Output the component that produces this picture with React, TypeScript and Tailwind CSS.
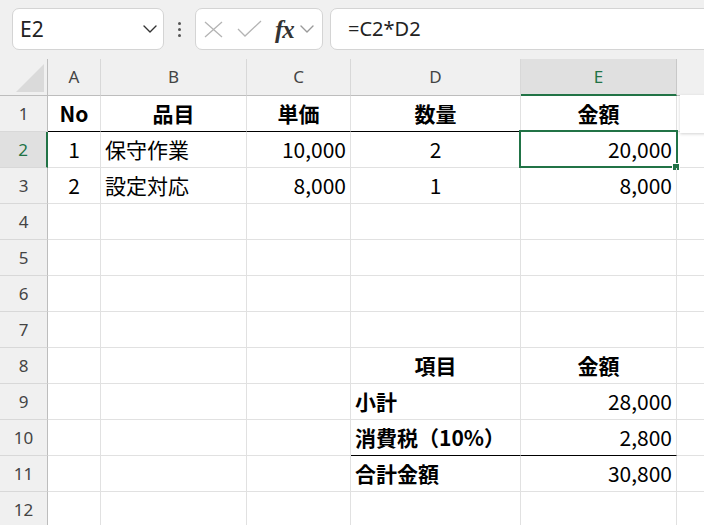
import React from "react";

const cols = [
  { key: "A", w: "w-[53px]" },
  { key: "B", w: "w-[146px]" },
  { key: "C", w: "w-[104px]" },
  { key: "D", w: "w-[170px]" },
  { key: "E", w: "w-[156px]" },
];

type Cell = { t?: string; align?: "l" | "c" | "r"; bold?: boolean };

const data: Record<number, Record<string, Cell>> = {
  1: {
    A: { t: "No", align: "c", bold: true },
    B: { t: "品目", align: "c", bold: true },
    C: { t: "単価", align: "c", bold: true },
    D: { t: "数量", align: "c", bold: true },
    E: { t: "金額", align: "c", bold: true },
  },
  2: {
    A: { t: "1", align: "c" },
    B: { t: "保守作業", align: "l" },
    C: { t: "10,000", align: "r" },
    D: { t: "2", align: "c" },
    E: { t: "20,000", align: "r" },
  },
  3: {
    A: { t: "2", align: "c" },
    B: { t: "設定対応", align: "l" },
    C: { t: "8,000", align: "r" },
    D: { t: "1", align: "c" },
    E: { t: "8,000", align: "r" },
  },
  8: {
    D: { t: "項目", align: "c", bold: true },
    E: { t: "金額", align: "c", bold: true },
  },
  9: {
    D: { t: "小計", align: "l", bold: true },
    E: { t: "28,000", align: "r" },
  },
  10: {
    D: { t: "消費税（10%）", align: "l", bold: true },
    E: { t: "2,800", align: "r" },
  },
  11: {
    D: { t: "合計金額", align: "l", bold: true },
    E: { t: "30,800", align: "r" },
  },
};

function blackBottom(row: number, col: string) {
  if (row === 1) return true;
  if (row === 10 && (col === "D" || col === "E")) return true;
  return false;
}

function Chevron({ cls, color }: { cls: string; color: string }) {
  return (
    <svg className={cls} viewBox="0 0 14 8" fill="none">
      <path d="M1 1 L7 7 L13 1" stroke={color} strokeWidth="1.4" strokeLinecap="round" strokeLinejoin="round" />
    </svg>
  );
}

export default function App() {
  const rows = Array.from({ length: 12 }, (_, i) => i + 1);
  return (
    <div
      className="relative w-[704px] h-[525px] overflow-hidden bg-white text-black"
      style={{ fontFamily: '"Noto Sans", "Noto Sans CJK JP", sans-serif' }}
    >
      {/* Toolbar */}
      <div className="h-[59px] bg-[#f0f0f0] flex items-start pt-[8px] pl-[12px]">
        <div className="w-[152px] h-[42px] rounded-[7px] border border-[#d4d4d4] bg-white flex items-center justify-between pl-[7px] pr-[6px]">
          <span className="text-[21px] text-[#222] leading-none">E2</span>
          <Chevron cls="w-[14px] h-[8px]" color="#333" />
        </div>
        <div className="w-[31px] h-[42px] flex flex-col items-center justify-center gap-[3px]">
          <span className="block w-[3px] h-[3px] rounded-full bg-[#555]" />
          <span className="block w-[3px] h-[3px] rounded-full bg-[#555]" />
          <span className="block w-[3px] h-[3px] rounded-full bg-[#555]" />
        </div>
        <div className="w-[128px] h-[42px] rounded-[7px] border border-[#d4d4d4] bg-white flex items-center pl-[8px]">
          <svg className="w-[19px] h-[17px]" viewBox="0 0 19 17" fill="none">
            <path d="M1 1 L18 16 M18 1 L1 16" stroke="#b4b4b4" strokeWidth="1.3" />
          </svg>
          <svg className="w-[25px] h-[18px] ml-[14px]" viewBox="0 0 25 18" fill="none">
            <path d="M1 9 L8 16 L24 1" stroke="#b4b4b4" strokeWidth="1.3" />
          </svg>
          <span
            className="ml-[13px] text-[25px] italic font-bold text-[#333] leading-none tracking-[-1px]"
            style={{ fontFamily: '"Liberation Serif", "DejaVu Serif", serif' }}
          >
            fx
          </span>
          <Chevron cls="w-[14px] h-[8px] ml-[6px]" color="#9a9a9a" />
        </div>
        <div className="flex-1 ml-[7px] -mr-[10px] h-[42px] rounded-[7px] border border-[#d4d4d4] bg-white flex items-center pl-[17px]">
          <span className="text-[20px] text-[#222] leading-none">=C2*D2</span>
        </div>
      </div>

      {/* Column header row */}
      <div className="flex h-[37px] bg-[#f0f0f0]">
        <div className="relative w-[48px] h-full border-r border-b border-[#bdbdbd] flex items-end justify-end pr-[3px] pb-[3px]">
          <svg className="w-[28px] h-[28px]" viewBox="0 0 28 28">
            <polygon points="28,0 28,28 0,28" fill="#dadada" />
          </svg>
        </div>
        {cols.map((c) =>
          c.key === "E" ? (
            <div
              key={c.key}
              className={`${c.w} h-full bg-[#e0e0e0] border-r border-[#c8c8c8] border-b-2 border-b-[#217346] flex items-center justify-center text-[17px] text-[#217346]`}
            >
              {c.key}
            </div>
          ) : (
            <div
              key={c.key}
              className={`${c.w} h-full border-r border-[#d8d8d8] border-b border-b-[#bdbdbd] flex items-center justify-center text-[17px] text-[#444]`}
            >
              {c.key}
            </div>
          )
        )}
        <div className="flex-1 h-full border-b border-[#bdbdbd]" />
      </div>

      {/* Rows */}
      {rows.map((r) => (
        <div key={r} className="flex h-[36px]">
          {r === 2 ? (
            <div className="w-[48px] h-full bg-[#e0e0e0] border-r-2 border-[#217346] border-b border-b-[#d8d8d8] flex items-center justify-center text-[17px] text-[#217346]">
              {r}
            </div>
          ) : (
            <div className="w-[48px] h-full bg-[#f0f0f0] border-r border-[#bdbdbd] border-b border-b-[#d8d8d8] flex items-center justify-center text-[17px] text-[#444]">
              {r}
            </div>
          )}
          {cols.map((c) => {
            const cell = data[r]?.[c.key];
            const black = blackBottom(r, c.key);
            const align =
              cell?.align === "r"
                ? "justify-end pr-[4px]"
                : cell?.align === "l"
                ? "justify-start pl-[4px]"
                : "justify-center";
            return (
              <div
                key={c.key}
                className={`relative ${c.w} h-full border-r border-[#e1e1e1] border-b ${
                  black ? "border-b-black" : "border-b-[#e1e1e1]"
                } flex items-center ${align} text-[21px] whitespace-nowrap ${
                  cell?.bold ? "font-bold" : "font-normal"
                }`}
                style={{ fontFamily: '"Noto Sans CJK JP", sans-serif' }}
              >
                {cell?.t ?? ""}
                {r === 2 && c.key === "E" && (
                  <>
                    <div className="absolute -left-[2px] -top-[2px] w-[159px] h-[38px] border-2 border-[#217346] pointer-events-none" />
                    <div className="absolute left-[151px] top-[31px] w-[8px] h-[8px] bg-[#217346] border border-white" />
                  </>
                )}
              </div>
            );
          })}
          <div className="flex-1 h-full border-b border-[#e1e1e1]" />
        </div>
      ))}

      {/* Floating white panel remnant on the right */}
      <div className="absolute left-[680px] top-[95px] w-[30px] h-[38px] bg-white shadow-[0_1px_3px_rgba(0,0,0,0.18)]" />
    </div>
  );
}
